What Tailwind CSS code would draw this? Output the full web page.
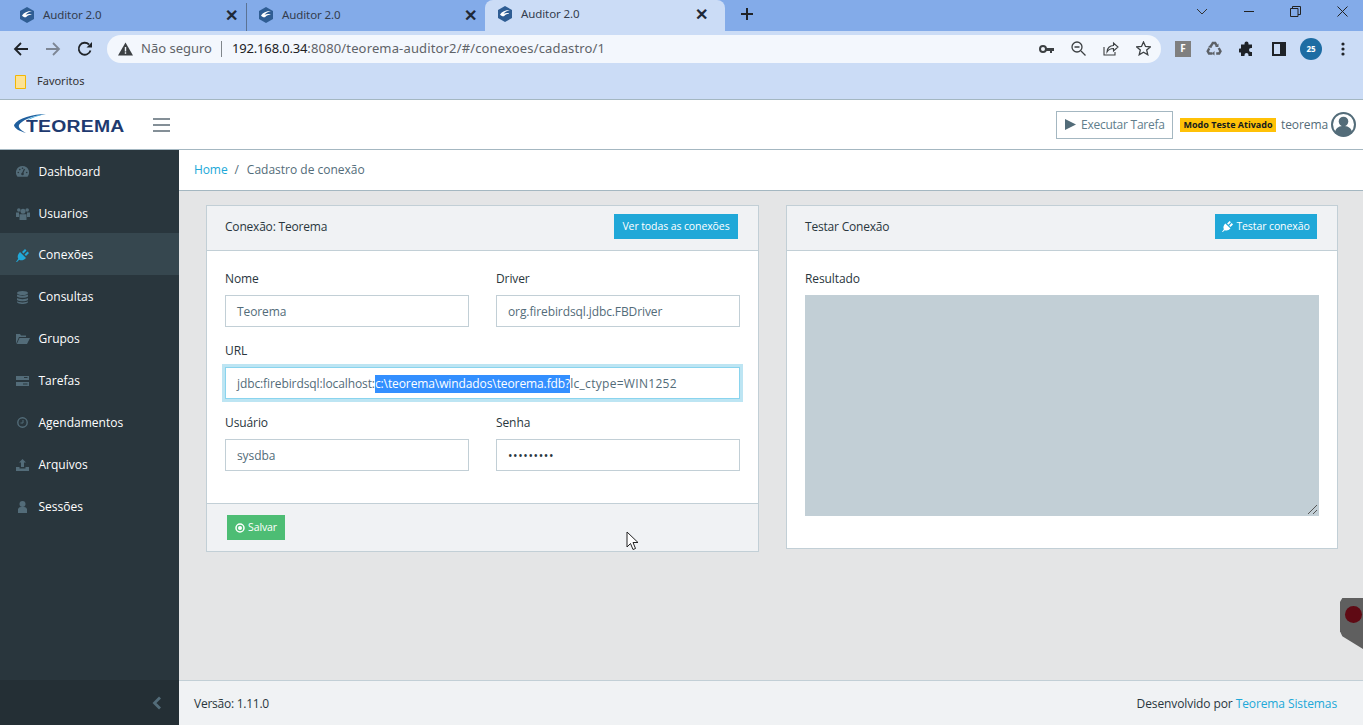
<!DOCTYPE html>
<html lang="pt-BR">

<head>
	<meta charset="UTF-8">
	<meta name="viewport" content="width=device-width, initial-scale=1.0">
	<title>Auditor 2.0</title>
	<script src="https://cdn.jsdelivr.net/npm/@tailwindcss/browser@4"></script>
</head>

<body class="h-[725px] w-[1363px] overflow-hidden bg-[#e4e5e6] font-['Open_Sans',sans-serif] text-[12px] text-[#29363d]">
	<!-- Tab strip -->
	<div class="relative flex h-[31px] items-end bg-[#83abe9] font-['Noto_Sans',sans-serif]">
		<div class="flex h-[28px] w-[246px] items-center pl-[19px] pr-[8px] pb-[5px]">
			<svg class="h-[16px] w-[16px]" viewBox="0 0 16 16"><path d="M8 0l7 4v8l-7 4-7-4V4z" fill="#2f5d93"/><path d="M3 8.500C5 5.500 8 4 13 4 10 5 8 6 6.500 7.800c2-.8 4-.9 6.500-.3-2.500.2-4.500.8-6 2.700C5.500 10.500 4 10 3 8.500z" fill="#fff"/></svg>
			<span class="ml-[8px] text-[11.500px] tracking-[-0.1px] text-[#333d4d]">Auditor 2.0</span>
			<span class="ml-auto text-[16px] leading-none font-semibold text-[#1f2937]">✕</span>
		</div>
		<div class="flex h-[28px] w-[239px] items-center border-l border-[#5b7395] pl-[11px] pr-[8px] pb-[5px]">
			<svg class="h-[16px] w-[16px]" viewBox="0 0 16 16"><path d="M8 0l7 4v8l-7 4-7-4V4z" fill="#2f5d93"/><path d="M3 8.500C5 5.500 8 4 13 4 10 5 8 6 6.500 7.800c2-.8 4-.9 6.500-.3-2.500.2-4.500.8-6 2.700C5.500 10.500 4 10 3 8.500z" fill="#fff"/></svg>
			<span class="ml-[8px] text-[11.500px] tracking-[-0.1px] text-[#333d4d]">Auditor 2.0</span>
			<span class="ml-auto text-[16px] leading-none font-semibold text-[#1f2937]">✕</span>
		</div>
		<div class="flex h-[31px] w-[240px] items-center rounded-t-[8px] bg-[#cbdcf6] pb-[3px] pl-[12px] pr-[17px]">
			<svg class="h-[16px] w-[16px]" viewBox="0 0 16 16"><path d="M8 0l7 4v8l-7 4-7-4V4z" fill="#2f5d93"/><path d="M3 8.500C5 5.500 8 4 13 4 10 5 8 6 6.500 7.800c2-.8 4-.9 6.500-.3-2.500.2-4.500.8-6 2.700C5.500 10.500 4 10 3 8.500z" fill="#fff"/></svg>
			<span class="ml-[8px] text-[11.500px] tracking-[-0.1px] text-[#333d4d]">Auditor 2.0</span>
			<span class="ml-auto text-[16px] leading-none font-semibold text-[#1f2937]">✕</span>
		</div>
		<svg class="mb-[10px] ml-[15px] h-[14px] w-[14px]" viewBox="0 0 14 14"><path d="M7 1v12M1 7h12" stroke="#1f2328" stroke-width="2"/></svg>
		<!-- Window buttons -->
		<div class="ml-auto flex h-[31px] items-start pt-[6px]">
			<svg class="mr-[36px] mt-[1px] h-[10px] w-[12px]" viewBox="0 0 12 10"><path d="M1 2l5 5 5-5" fill="none" stroke="#333" stroke-width="1"/></svg>
			<svg class="mr-[35px] mt-[0px] h-[10px] w-[11px]" viewBox="0 0 11 10"><path d="M0 5.500h10" stroke="#222" stroke-width="1"/></svg>
			<svg class="mr-[36px] h-[11px] w-[11px]" viewBox="0 0 11 11"><path d="M.5 2.500h7.500v8H.5zM2.500 2.500V.5h8v8H8" fill="none" stroke="#222"/></svg>
			<svg class="mr-[15px] h-[11px] w-[11px]" viewBox="0 0 11 11"><path d="M.5.5l10 10M10.500.5l-10 10" stroke="#222"/></svg>
		</div>
	</div>

	<!-- Toolbar -->
	<div class="flex h-[35px] items-center bg-[#cbdcf6] font-['Noto_Sans',sans-serif]">
		<svg class="ml-[13px] h-[16px] w-[16px]" viewBox="0 0 16 16"><path d="M15 8H2M8 2L2 8l6 6" fill="none" stroke="#1f2328" stroke-width="1.800"/></svg>
		<svg class="ml-[16px] h-[16px] w-[16px]" viewBox="0 0 16 16"><path d="M1 8h13M8 2l6 6-6 6" fill="none" stroke="#7d8694" stroke-width="1.800"/></svg>
		<svg class="ml-[16px] h-[16px] w-[16px]" viewBox="0 0 16 16"><path d="M13.500 9.500A6 6 0 1 1 12 3.500" fill="none" stroke="#1f2328" stroke-width="1.800"/><path d="M9.500 6.500H15V1z" fill="#1f2328"/></svg>
		<div class="ml-[14px] flex h-[28px] w-[1054px] items-center rounded-full bg-[#f3f7fd] pl-[11px]">
			<svg class="h-[14px] w-[15px]" viewBox="0 0 15 14"><path d="M7.500 0.500L15 13.500H0z" fill="#3c4043"/><path d="M6.800 5h1.400v4.500H6.800zM6.800 10.300h1.400v1.400H6.800z" fill="#f3f7fd"/></svg>
			<span class="ml-[8px] pt-[1px] text-[13px] text-[#5f6368]">Não seguro</span>
			<span class="ml-[9px] h-[16px] w-px bg-[#80868b]"></span>
			<span class="ml-[10px] pt-[1px] text-[13px] tracking-[0.15px] text-[#5f6368]"><span class="tracking-[-0.17px] text-[#202124]">192.168.0.34</span>:8080/teorema-auditor2/#/conexoes/cadastro/1</span>
			<div class="ml-auto flex items-center gap-[17px] pr-[10px]">
				<svg class="h-[10px] w-[15px]" viewBox="0 0 15 10"><circle cx="4" cy="5" r="3" fill="none" stroke="#3c4043" stroke-width="2"/><path d="M7 4h8v3h-2v2h-2V7H7z" fill="#3c4043"/></svg>
				<svg class="h-[15px] w-[15px]" viewBox="0 0 15 15"><circle cx="6" cy="6" r="5" fill="none" stroke="#3c4043" stroke-width="1.300"/><path d="M3.500 6h5M10 10l4.500 4.500" stroke="#3c4043" stroke-width="1.300"/></svg>
				<svg class="h-[15px] w-[16px]" viewBox="0 0 16 15"><path d="M1 6v8h11v-3" fill="none" stroke="#3c4043" stroke-width="1.100"/><path d="M4 11c0-4 3-6.500 6.500-6.500V2L15 6l-4.500 4V7.500C8 7.500 5.500 8.500 4 11z" fill="none" stroke="#3c4043" stroke-width="1.100"/></svg>
				<svg class="h-[15px] w-[15px]" viewBox="0 0 15 15"><path d="M7.500 1l2 4.500 4.800.4-3.600 3.200 1.100 4.700-4.300-2.500-4.300 2.500 1.100-4.700L.7 5.900l4.800-.4z" fill="none" stroke="#3c4043" stroke-width="1.300"/></svg>
			</div>
		</div>
		<span class="ml-[14px] flex h-[16px] w-[16px] items-center justify-center bg-[#7f7f7f] text-[10px] font-bold text-white">F</span>
		<svg class="ml-[15px] h-[16px] w-[16px]" viewBox="0 0 16 16"><path d="M4.800 5.500L6.800 2h2.400l1.500 2.600M12.700 7l1.800 3.200-1.300 2.300h-3M6.500 12.500H3l-1.300-2.300 1.600-2.800" fill="none" stroke="#5c6066" stroke-width="2.400"/><path d="M9 6h3.500V2.500zM8.500 10v4.500L6 12.500zM1.800 6.200L5.800 7 5 3.200z" fill="#5c6066"/></svg>
		<svg class="ml-[17px] h-[15px] w-[15px]" viewBox="0 0 15 15"><path d="M5.500 2.500a2 2 0 0 1 4 0V3.500H13v3.500h-1a2 2 0 0 0 0 4h1V15H9.500v-1a2 2 0 0 0-4 0v1H2v-3.500H1a2 2 0 0 1 0-4h1V3.500h3.500z" fill="#1f2328"/></svg>
		<svg class="ml-[18px] h-[14px] w-[14px]" viewBox="0 0 14 14"><path d="M0 0h14v14H0z" fill="#1f2328"/><path d="M2 2h6v10H2z" fill="#cbdcf6"/></svg>
		<span class="ml-[14px] flex h-[22px] w-[22px] items-center justify-center rounded-full bg-[#1d6ca3] text-[8px] font-bold text-white">25</span>
		<svg class="ml-[19px] h-[14px] w-[4px]" viewBox="0 0 4 14"><circle cx="2" cy="2" r="1.600" fill="#1f2328"/><circle cx="2" cy="7" r="1.600" fill="#1f2328"/><circle cx="2" cy="12" r="1.600" fill="#1f2328"/></svg>
	</div>

	<!-- Bookmarks -->
	<div class="flex h-[34px] items-center border-b border-[#a4b7c1] bg-[#cbdcf6] pb-[2px] pl-[15px] font-['Noto_Sans',sans-serif]">
		<svg class="h-[14px] w-[12px]" viewBox="0 0 12 14"><path d="M.5.500h10v13H.5z" fill="#fde293" stroke="#f2b705"/></svg>
		<span class="ml-[10px] text-[11px] text-[#333]">Favoritos</span>
	</div>

	<!-- App header -->
	<header class="flex h-[50px] items-center border-b border-[#a4b7c1] bg-white">
		<div class="relative ml-[13px] h-[24px] w-[113px]">
			<svg class="absolute left-0 top-0 h-[24px] w-[40px]" viewBox="0 0 40 24"><path d="M33 1C20 1 5 5 1 12c0 3 5 6 12 8-5-3-8-5-7-8C8 8 18 3 33 1z" fill="#1f5f9e"/><path d="M33 1C25 2 18 4 13 8c4-2 10-5 20-7z" fill="#2aa3dc"/></svg>
			<span class="absolute left-[13px] top-[4px] origin-left scale-x-[1.210] text-[16px] leading-[20px] font-extrabold tracking-[0.2px] text-[#1e3a70] font-['Liberation_Sans',sans-serif]">TEOREMA</span>
		</div>
		<svg class="ml-[27px] h-[14px] w-[17px]" viewBox="0 0 17 14"><path d="M0 1h17M0 7h17M0 13h17" stroke="#5c6b75" stroke-width="1.300"/></svg>
		<div class="ml-auto flex items-center">
			<div class="flex h-[28px] w-[117px] items-center border border-[#a4b7c1] pl-[8px] text-[12px] tracking-[-0.25px] text-[#607d8b]">
				<svg class="h-[11px] w-[11px]" viewBox="0 0 11 11"><path d="M0 0l11 5.500L0 11z" fill="#536c79"/></svg>
				<span class="ml-[5px]">Executar Tarefa</span>
			</div>
			<span class="ml-[7px] flex h-[14px] w-[96px] items-center justify-center bg-[#ffc107] text-[9px] font-bold text-[#151b1e]">Modo Teste Ativado</span>
			<span class="ml-[5px] text-[12px] tracking-[-0.1px] text-[#536c79]">teorema</span>
			<svg class="ml-[3px] mr-[7px] h-[25px] w-[25px]" viewBox="0 0 25 25"><circle cx="12.500" cy="12.500" r="12.500" fill="#536c79"/><circle cx="12.500" cy="12.500" r="10.500" fill="#fff"/><circle cx="12.500" cy="9.500" r="4.800" fill="#536c79"/><path d="M4 20c1-5 5-6 8.500-6s7.500 1 8.500 6c-2 2.500-5 4-8.500 4S6 22.500 4 20z" fill="#536c79"/></svg>
		</div>
	</header>

	<div class="flex h-[575px]">
		<!-- Sidebar -->
		<aside class="flex w-[179px] flex-col bg-[#29363d] text-white">
			<nav class="flex-1 pt-[0.700px]">
				<a class="flex h-[41.900px] items-center pl-[16px]" href="#">
					<span class="flex w-[22.500px]"><svg class="h-[11px] w-[13px]" viewBox="0 0 13 11"><path d="M6.500 0a6.500 6.500 0 0 0-5 10.700h10A6.500 6.500 0 0 0 6.500 0z" fill="#536c79"/><path d="M6.500 7.500L8.500 3" stroke="#29363d" stroke-width="1.200"/><circle cx="6.500" cy="8" r="1.300" fill="#29363d"/><circle cx="3.800" cy="3.600" r=".8" fill="#29363d"/><circle cx="6.500" cy="2.200" r=".8" fill="#29363d"/><circle cx="2.300" cy="6.500" r=".8" fill="#29363d"/><circle cx="10.700" cy="6.500" r=".8" fill="#29363d"/></svg></span>
					<span>Dashboard</span>
				</a>
				<a class="flex h-[41.900px] items-center pl-[16px]" href="#">
					<span class="flex w-[22.500px]"><svg class="h-[12px] w-[14px]" viewBox="0 0 14 12"><circle cx="2.800" cy="2" r="1.800" fill="#536c79"/><circle cx="11.200" cy="2" r="1.800" fill="#536c79"/><circle cx="7" cy="3.200" r="2.500" fill="#536c79"/><path d="M0 4.500h3v4.500H0zM11 4.500h3v4.500h-3zM3.500 6.200h7V12h-7z" fill="#536c79"/></svg></span>
					<span>Usuarios</span>
				</a>
				<a class="relative flex h-[41.900px] items-center pl-[16px] before:absolute before:inset-x-0 before:-top-[1px] before:h-[42px] before:bg-[#36474f]" href="#">
					<span class="relative flex w-[22.500px]"><svg class="h-[13px] w-[13px]" viewBox="0 0 13 13"><path d="M0 13l2.200-3.200C1 7.500 2 5 4 3l6 6c-2 2-4.500 3-6.800 1.800L1 13zM6 3L9 0l1.500 1.500-3 3zM8.500 5.500l3-3L13 4l-3 3z" fill="#20a8d8"/></svg></span>
					<span class="relative">Conexões</span>
				</a>
				<a class="flex h-[41.900px] items-center pl-[17px]" href="#">
					<span class="flex w-[21.500px]"><svg class="h-[13px] w-[11px]" viewBox="0 0 11 13"><ellipse cx="5.500" cy="2" rx="5.500" ry="2" fill="#536c79"/><path d="M0 3.500c2 1.500 9 1.500 11 0v2c-2 1.800-9 1.800-11 0zM0 7c2 1.500 9 1.500 11 0v2c-2 1.800-9 1.800-11 0zM0 10.300c2 1.500 9 1.500 11 0v1c-2 2.300-9 2.300-11 0z" fill="#536c79"/></svg></span>
					<span>Consultas</span>
				</a>
				<a class="flex h-[41.900px] items-center pl-[16px]" href="#">
					<span class="flex w-[22.500px]"><svg class="h-[10px] w-[14px]" viewBox="0 0 14 10"><path d="M0 10V0h4l1 1.500h5V3H3L0 10zM3.500 4H14l-3 6H.8z" fill="#536c79"/></svg></span>
					<span>Grupos</span>
				</a>
				<a class="flex h-[41.900px] items-center pl-[16px]" href="#">
					<span class="flex w-[22.500px]"><svg class="h-[10px] w-[13px]" viewBox="0 0 13 10"><path d="M0 0h13v4H0zM0 6h13v4H0z" fill="#536c79"/><path d="M8 1.500h3.500M7 8h4.500" stroke="#29363d"/></svg></span>
					<span>Tarefas</span>
				</a>
				<a class="flex h-[41.900px] items-center pl-[17px]" href="#">
					<span class="flex w-[21.500px]"><svg class="h-[11px] w-[11px]" viewBox="0 0 11 11"><circle cx="5.500" cy="5.500" r="4.700" fill="none" stroke="#536c79" stroke-width="1.400"/><path d="M6 3v3H3.500" fill="none" stroke="#536c79"/></svg></span>
					<span>Agendamentos</span>
				</a>
				<a class="flex h-[41.900px] items-center pl-[16px]" href="#">
					<span class="flex w-[22.500px]"><svg class="h-[12px] w-[13px]" viewBox="0 0 13 12"><path d="M6.500 0L10 3.500H8V8H5V3.500H3zM0 8h3.500v1.500h6V8H13v4H0z" fill="#536c79"/></svg></span>
					<span>Arquivos</span>
				</a>
				<a class="flex h-[41.900px] items-center pl-[18px]" href="#">
					<span class="flex w-[20.500px]"><svg class="h-[12px] w-[9px]" viewBox="0 0 9 12"><circle cx="4.500" cy="3" r="3" fill="#536c79"/><path d="M0 12V8a3 3 0 0 1 3-2h3a3 3 0 0 1 3 2v4z" fill="#536c79"/></svg></span>
					<span>Sessões</span>
				</a>
			</nav>
			<div class="flex h-[45px] items-center justify-end bg-[#242f35] pr-[17px]">
				<svg class="h-[14px] w-[10px]" viewBox="0 0 10 14"><path d="M8 1.500L2.500 7 8 12.500" fill="none" stroke="#536c79" stroke-width="2.800"/></svg>
			</div>
		</aside>

		<!-- Main -->
		<div class="flex flex-1 flex-col tracking-[-0.1px]">
			<div class="flex h-[41px] items-center border-b border-[#a4b7c1] bg-white pl-[15px]">
				<a class="text-[#20a8d8]" href="#">Home</a>
				<span class="mx-[7px] text-[#536c79]">/</span>
				<span class="pl-[1px] tracking-normal text-[#536c79]">Cadastro de conexão</span>
			</div>

			<main class="relative flex flex-1 items-start gap-[27px] pl-[27px] pr-[25px] pt-[14px]">
				<!-- Connection form card -->
				<section class="h-[347px] w-[553px] border border-[#c2cfd6] bg-white">
					<div class="flex h-[45px] items-center justify-between border-b border-[#c2cfd6] bg-[#f0f2f4] pb-[3px] pl-[18px] pr-[20px]">
						<span class="tracking-[-0.2px]">Conexão: Teorema</span>
						<button class="h-[25px] w-[124px] bg-[#20a8d8] text-[10.500px] text-white">Ver todas as conexões</button>
					</div>
					<div class="h-[252px] px-[18px] pt-[19px]">
						<div class="grid grid-cols-2 gap-x-[27px]">
							<div>
								<label class="block h-[25px] leading-[17px]">Nome</label>
								<div class="flex h-[32px] items-center border border-[#c2cfd6] pl-[11px] pt-[1px] text-[#536c79]">Teorema</div>
							</div>
							<div>
								<label class="block h-[25px] leading-[17px]">Driver</label>
								<div class="flex h-[32px] items-center border border-[#c2cfd6] pl-[11px] pt-[1px] text-[#536c79]">org.firebirdsql.jdbc.FBDriver</div>
							</div>
						</div>
						<label class="mt-[15px] block h-[25px] leading-[17px]">URL</label>
						<div class="flex h-[32px] items-center border border-[#8ad4ee] pl-[11px] pt-[1px] text-[#536c79] shadow-[0_0_0_3px_#bde5f3]">jdbc:firebirdsql:localhost:<span class="bg-[#338fff] text-white">c:\teorema\windados\teorema.fdb?</span><span class="tracking-[0.3px]">lc_ctype=WIN1252</span></div>
						<div class="mt-[15px] grid grid-cols-2 gap-x-[27px]">
							<div>
								<label class="block h-[25px] leading-[17px]">Usuário</label>
								<div class="flex h-[32px] items-center border border-[#c2cfd6] pl-[11px] pt-[1px] text-[#536c79]">sysdba</div>
							</div>
							<div>
								<label class="block h-[25px] leading-[17px]">Senha</label>
								<div class="flex h-[32px] items-center border border-[#c2cfd6] pl-[11px] pt-[1px] tracking-[0.6px] text-[#29363d]">•••••••••</div>
							</div>
						</div>
					</div>
					<div class="flex h-[48px] items-center border-t border-[#c2cfd6] bg-[#f0f2f4] pl-[20px]">
						<button class="flex h-[25px] w-[58px] items-center justify-center bg-[#4dbd74] text-[10.500px] text-white">
							<svg class="mr-[3px] h-[10px] w-[10px]" viewBox="0 0 10 10"><circle cx="5" cy="5" r="4" fill="none" stroke="#fff" stroke-width="1.500"/><circle cx="5" cy="5" r="2" fill="#fff"/></svg>
							Salvar
						</button>
					</div>
				</section>

				<!-- Test card -->
				<section class="h-[344px] flex-1 border border-[#c2cfd6] bg-white">
					<div class="flex h-[45px] items-center justify-between border-b border-[#c2cfd6] bg-[#f0f2f4] pb-[3px] pl-[18px] pr-[20px]">
						<span class="tracking-[-0.2px]">Testar Conexão</span>
						<button class="flex h-[25px] w-[102px] items-center justify-center bg-[#20a8d8] text-[10.500px] text-white">
							<svg class="mr-[3px] h-[11px] w-[11px]" viewBox="0 0 13 13"><path d="M0 13l2.200-3.200C1 7.500 2 5 4 3l6 6c-2 2-4.500 3-6.800 1.800L1 13zM6 3L9 0l1.500 1.500-3 3zM8.500 5.500l3-3L13 4l-3 3z" fill="#fff"/></svg>
							Testar conexão
						</button>
					</div>
					<div class="px-[18px] pt-[19px]">
						<label class="block h-[25px] leading-[17px]">Resultado</label>
						<div class="relative h-[221px] w-[514px] bg-[#c2cfd6]">
							<svg class="absolute bottom-[2px] right-[2px] h-[9px] w-[9px]" viewBox="0 0 9 9"><path d="M0 9L9 0M5 9l4-4" stroke="#555" stroke-width="1"/></svg>
						</div>
					</div>
				</section>

				<!-- Floating handle on the right edge -->
				<div class="absolute right-0 top-[407px] h-[51px] w-[23px] bg-[#5f5f5f] [clip-path:polygon(10%_0,100%_0,100%_100%,10%_75%,0_65%,0_8%)]">
					<span class="absolute left-[5px] top-[8px] h-[17px] w-[17px] rounded-full bg-[#5f0a14]"></span>
				</div>

				<!-- Mouse pointer -->
				<svg class="absolute left-[447px] top-[340px] h-[20px] w-[13px]" viewBox="0 0 13 20"><path d="M1 1v15l3.500-3.500 2.500 6 2.500-1-2.500-6H12z" fill="#fff" stroke="#222"/></svg>
			</main>

			<footer class="flex h-[45px] items-center justify-between border-t border-[#c2cfd6] bg-[#f0f2f4] pl-[15px] pr-[26px] pt-[2px]">
				<span class="tracking-[-0.25px]">Versão: 1.11.0</span>
				<span>Desenvolvido por <a class="text-[#20a8d8]" href="#">Teorema Sistemas</a></span>
			</footer>
		</div>
	</div>
</body>

</html>
